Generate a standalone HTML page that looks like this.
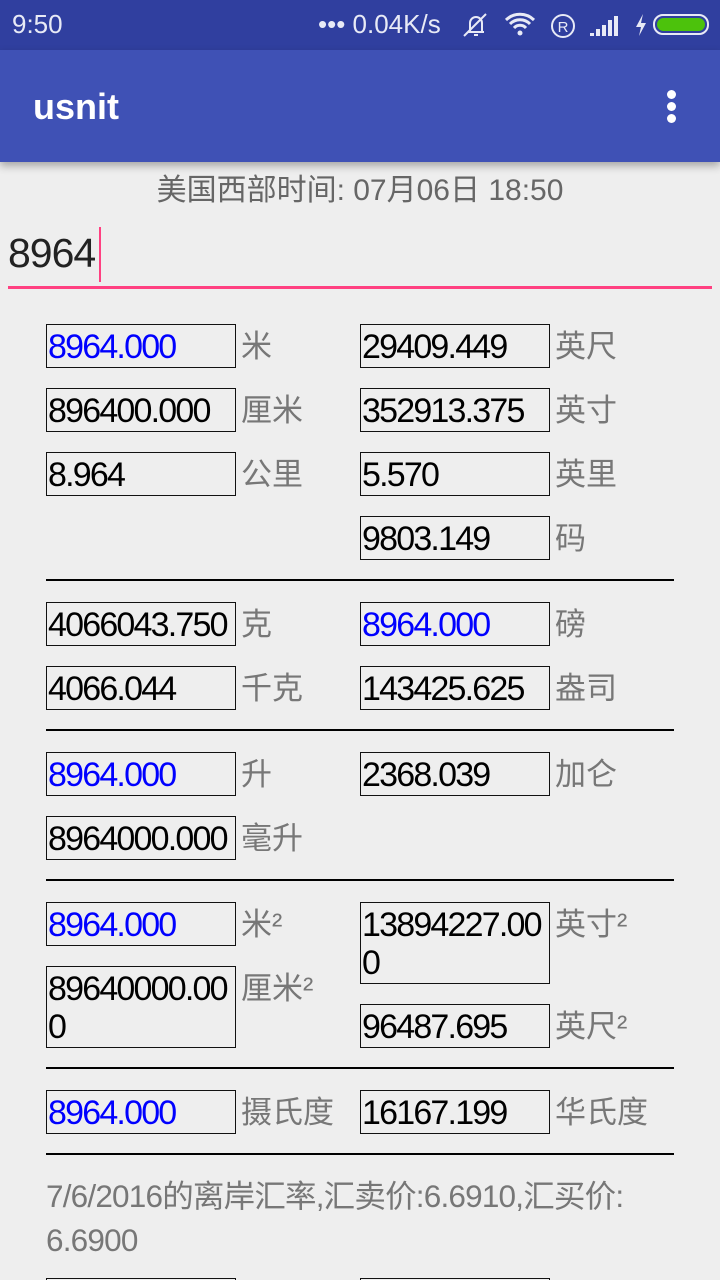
<!DOCTYPE html>
<html><head><meta charset="utf-8"><style>
*{margin:0;padding:0;box-sizing:border-box}
html,body{width:720px;height:1280px;overflow:hidden}
body{background:#eeeeee;font-family:"Liberation Sans","Noto Sans CJK SC",sans-serif;position:relative}
.sb{position:absolute;left:0;top:0;width:720px;height:50px;background:#303f9f;color:#e8eaf6;font-size:26px}
.ab{position:absolute;left:0;top:50px;width:720px;height:112px;background:#3f51b5;box-shadow:0 4px 8px rgba(0,0,0,.3)}
.b{position:absolute;width:190px;border:1px solid #111;font-size:34px;line-height:38px;padding:3px 0 1px 1px;color:#000;white-space:nowrap;overflow:visible;letter-spacing:-1.8px}
.bl{color:#0000ff}
.l{position:absolute;font-size:31px;color:#777;line-height:44px}
.hr{position:absolute;left:46px;width:628px;height:2px;background:#000}
</style></head><body>
<div class="sb">
<span style="position:absolute;left:12px;top:9px">9:50</span>
<span style="position:absolute;left:318px;top:9px">••• 0.04K/s</span>
<svg style="position:absolute;left:460px;top:12px" width="32" height="26" viewBox="0 0 32 26"><path d="M8 20h16M10 20V11a6 6 0 0 1 12 0v9M14 23h4M4 24L26 2" stroke="#e8eaf6" stroke-width="2" fill="none"/></svg>
<svg style="position:absolute;left:504px;top:12px" width="32" height="26" viewBox="0 0 32 26"><path d="M2 8a20 20 0 0 1 28 0M6 12a14 14 0 0 1 20 0M10 16a8 8 0 0 1 12 0" stroke="#e8eaf6" stroke-width="3" fill="none"/><circle cx="16" cy="21" r="2.5" fill="#e8eaf6"/></svg>
<svg style="position:absolute;left:550px;top:13px" width="26" height="26" viewBox="0 0 26 26"><circle cx="13" cy="13" r="11" stroke="#e8eaf6" stroke-width="2" fill="none"/><text x="13" y="19" font-size="15" text-anchor="middle" fill="#e8eaf6" font-family="Liberation Sans">R</text></svg>
<svg style="position:absolute;left:590px;top:14px" width="32" height="24" viewBox="0 0 32 24"><path d="M2 22v-3M8 22v-7M14 22V11M20 22V6M26 22V2" stroke="#e8eaf6" stroke-width="4"/></svg>
<svg style="position:absolute;left:634px;top:13px" width="14" height="24" viewBox="0 0 14 24"><path d="M9 1L2 14h5l-2 9 7-13H7z" fill="#e8eaf6"/></svg>
<div style="position:absolute;left:653px;top:14px;width:56px;height:21px;border:2px solid #e8eaf6;border-radius:10px;padding:2px"><div style="width:100%;height:100%;background:#4cc20c;border-radius:7px"></div></div>
</div>
<div class="ab">
<span style="position:absolute;left:33px;top:36px;color:#fff;font-size:36px;font-weight:bold">usnit</span>
<div style="position:absolute;left:667px;top:40px;width:9px">
<div style="width:9px;height:9px;border-radius:50%;background:#fff;margin-bottom:3px"></div>
<div style="width:9px;height:9px;border-radius:50%;background:#fff;margin-bottom:3px"></div>
<div style="width:9px;height:9px;border-radius:50%;background:#fff"></div></div>
</div>
<div style="position:absolute;left:0;width:720px;top:165px;text-align:center;font-size:30px;color:#666">美国西部时间: 07月06日 18:50</div>
<div style="position:absolute;left:8px;top:230px;font-size:41px;color:#222;letter-spacing:-1px">8964</div>
<div style="position:absolute;left:99px;top:227px;width:2px;height:55px;background:#ff4081"></div>
<div style="position:absolute;left:8px;top:286px;width:704px;height:3px;background:#ff4081"></div>

<div class="b bl" style="left:46px;top:324px">8964.000</div><div class="l" style="left:241px;top:325px">米</div>
<div class="b" style="left:360px;top:324px">29409.449</div><div class="l" style="left:555px;top:325px">英尺</div>
<div class="b" style="left:46px;top:388px">896400.000</div><div class="l" style="left:241px;top:389px">厘米</div>
<div class="b" style="left:360px;top:388px">352913.375</div><div class="l" style="left:555px;top:389px">英寸</div>
<div class="b" style="left:46px;top:452px">8.964</div><div class="l" style="left:241px;top:453px">公里</div>
<div class="b" style="left:360px;top:452px">5.570</div><div class="l" style="left:555px;top:453px">英里</div>
<div class="b" style="left:360px;top:516px">9803.149</div><div class="l" style="left:555px;top:517px">码</div>
<div class="hr" style="top:579px"></div>
<div class="b" style="left:46px;top:602px">4066043.750</div><div class="l" style="left:241px;top:603px">克</div>
<div class="b bl" style="left:360px;top:602px">8964.000</div><div class="l" style="left:555px;top:603px">磅</div>
<div class="b" style="left:46px;top:666px">4066.044</div><div class="l" style="left:241px;top:667px">千克</div>
<div class="b" style="left:360px;top:666px">143425.625</div><div class="l" style="left:555px;top:667px">盎司</div>
<div class="hr" style="top:729px"></div>
<div class="b bl" style="left:46px;top:752px">8964.000</div><div class="l" style="left:241px;top:753px">升</div>
<div class="b" style="left:360px;top:752px">2368.039</div><div class="l" style="left:555px;top:753px">加仑</div>
<div class="b" style="left:46px;top:816px">8964000.000</div><div class="l" style="left:241px;top:817px">毫升</div>
<div class="hr" style="top:879px"></div>
<div class="b bl" style="left:46px;top:902px">8964.000</div><div class="l" style="left:241px;top:903px">米²</div>
<div class="b" style="left:360px;top:902px;height:82px">13894227.00<br>0</div><div class="l" style="left:555px;top:903px">英寸²</div>
<div class="b" style="left:46px;top:966px;height:82px">89640000.00<br>0</div><div class="l" style="left:241px;top:967px">厘米²</div>
<div class="b" style="left:360px;top:1004px">96487.695</div><div class="l" style="left:555px;top:1005px">英尺²</div>
<div class="hr" style="top:1067px"></div>
<div class="b bl" style="left:46px;top:1090px">8964.000</div><div class="l" style="left:241px;top:1091px">摄氏度</div>
<div class="b" style="left:360px;top:1090px">16167.199</div><div class="l" style="left:555px;top:1091px">华氏度</div>
<div class="hr" style="top:1153px"></div>
<div style="position:absolute;left:46px;top:1174px;width:660px;font-size:31.5px;line-height:44px;color:#777;letter-spacing:-0.8px">7/6/2016的离岸汇率,汇卖价:6.6910,汇买价:<br>6.6900</div>
<div class="b" style="left:46px;top:1278px;height:44px"></div>
<div class="b" style="left:360px;top:1278px;height:44px"></div>
</body></html>
